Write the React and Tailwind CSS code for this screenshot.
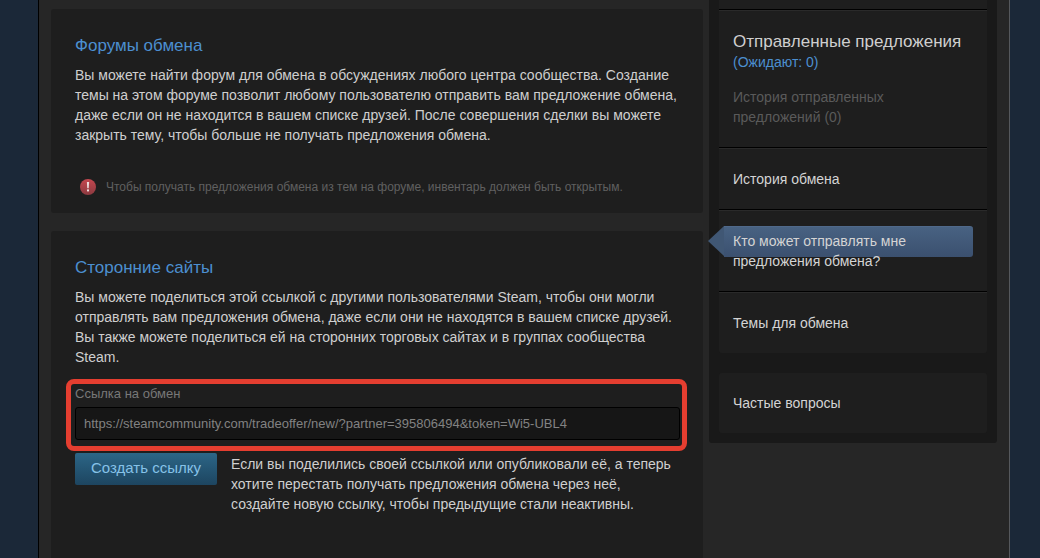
const bodyFont = "font-['Liberation_Sans',Arial,sans-serif]";

function AlertIcon() {
  return (
    <svg width="16" height="16" viewBox="0 0 16 16" className="shrink-0">
      <defs>
        <linearGradient id="alertFill" x1="0" y1="0" x2="0" y2="1">
          <stop offset="0" stopColor="#c4474f" />
          <stop offset="1" stopColor="#8c3a40" />
        </linearGradient>
      </defs>
      <circle cx="8" cy="8" r="8" fill="url(#alertFill)" />
      <path d="M6.9 3h2.2l-.4 6.2H7.3z" fill="#eedfdf" />
      <rect x="7" y="10.4" width="2" height="2" fill="#eedfdf" />
    </svg>
  );
}

function Divider() {
  return <div className="h-[2px] shrink-0 border-t border-black bg-[#2a2a2a]" />;
}

function ActiveTab() {
  return (
    <div className="absolute left-[-25px] top-[15px] flex h-[31px] w-[265px]">
      <div className="h-0 w-0 border-y-[15.5px] border-r-[16px] border-y-transparent border-r-[#405774]" />
      <div className="flex-1 rounded-r-[3px] border-t border-[#50698a] bg-gradient-to-b from-[#486282] to-[#3b506f]" />
    </div>
  );
}

export default function App() {
  return (
    <div className={`flex h-[558px] w-[1040px] overflow-hidden bg-[#1b2838] ${bodyFont}`}>
      <div className="w-[38px] shrink-0" />
      <div className="flex w-[972px] shrink-0 gap-[6px] border-x border-l-black border-r-[#55585c] bg-[#262626] pl-[12px] pt-[9px] pr-[12px]">
        <main className="flex w-[652px] shrink-0 flex-col gap-[18px]">
          <section className="h-[204px] rounded-[3px] bg-[#1e1e1e] px-[24px] pt-[26px]">
            <h2 className="text-[17px] leading-[20px] translate-y-[1px] font-normal text-[#4c8fd0]">Форумы обмена</h2>
            <p className="mt-[10px] w-[612px] text-[14px] leading-[20px] text-[#cfcfcf]">
              Вы можете найти форум для обмена в обсуждениях любого центра сообщества. Создание темы на этом форуме позволит любому пользователю отправить вам предложение обмена, даже если он не находится в вашем списке друзей. После совершения сделки вы можете закрыть тему, чтобы больше не получать предложения обмена.
            </p>
            <div className="mt-[34px] ml-[5px] flex items-center gap-[10px]">
              <AlertIcon />
              <span className="text-[12px] leading-[16px] text-[#606060]">
                Чтобы получать предложения обмена из тем на форуме, инвентарь должен быть открытым.
              </span>
            </div>
          </section>
          <section className="relative flex-1 rounded-t-[3px] bg-[#1e1e1e] px-[24px] pt-[26px]">
            <h2 className="text-[17px] leading-[20px] translate-y-[1px] font-normal text-[#4c8fd0]">Сторонние сайты</h2>
            <p className="mt-[10px] w-[612px] text-[14px] leading-[20px] text-[#cfcfcf]">
              Вы можете поделиться этой ссылкой с другими пользователями Steam, чтобы они могли отправлять вам предложения обмена, даже если они не находятся в вашем списке друзей. Вы также можете поделиться ей на сторонних торговых сайтах и в группах сообщества Steam.
            </p>
            <div className="mt-[19px] text-[13px] leading-[16px] text-[#787878]">Ссылка на обмен</div>
            <div className="mt-[5px] flex h-[33px] w-[605px] items-center rounded-[3px] border border-black bg-[#161616] px-[8px] text-[13px] text-[#828282]">
              https://steamcommunity.com/tradeoffer/new/?partner=395806494&amp;token=Wi5-UBL4
            </div>
            <div className="mt-[13px] flex gap-[14px]">
              <button className="h-[32px] w-[142px] shrink-0 rounded-[2px] bg-gradient-to-b from-[#2c6687] to-[#1d4560] pb-[1px] text-[15px] text-[#86c2e8]">
                Создать ссылку
              </button>
              <p className="mt-[1px] w-[450px] text-[14px] leading-[20px] text-[#cfcfcf]">
                Если вы поделились своей ссылкой или опубликовали её, а теперь хотите перестать получать предложения обмена через неё, создайте новую ссылку, чтобы предыдущие стали неактивны.
              </p>
            </div>
            <div className="absolute left-[15px] top-[148px] h-[72px] w-[621px] rounded-[8px] border-[5px] border-[#e53e30]" />
          </section>
        </main>
        <aside className="mt-[-9px] flex h-[443px] w-[288px] shrink-0 flex-col gap-[20px] rounded-b-[3px] bg-[#191919] px-[10px] pb-[10px]">
          <div className="flex h-[353px] flex-col rounded-b-[3px] bg-[#1e1e1e] pl-[14px] pr-0">
            <div className="-ml-[14px] flex flex-col">
              <div className="h-[9px] shrink-0" />
              <Divider />
            </div>
            <div className="h-[136px] pt-[21px]">
              <div className="text-[17px] leading-[20px] text-[#cfcfcf]">Отправленные предложения</div>
              <div className="text-[14px] leading-[20px] text-[#4c8fd0]">(Ожидают: 0)</div>
              <div className="mt-[15px] w-[220px] text-[14px] leading-[20px] text-[#5a5a5a]">История отправленных предложений (0)</div>
            </div>
            <div className="-ml-[14px]"><Divider /></div>
            <div className="flex h-[60px] items-center text-[14px] leading-[20px] text-[#d4d4d4]">История обмена</div>
            <div className="-ml-[14px]"><Divider /></div>
            <div className="relative h-[80px] pt-[20px] text-[14px] leading-[20px] text-[#d4d4d4]">
              <ActiveTab />
              <div className="relative w-[220px]">Кто может отправлять мне предложения обмена?</div>
            </div>
            <div className="-ml-[14px]"><Divider /></div>
            <div className="flex flex-1 items-center text-[14px] leading-[20px] text-[#d4d4d4]">Темы для обмена</div>
          </div>
          <div className="flex h-[60px] items-center rounded-[3px] bg-[#1e1e1e] pl-[14px] text-[14px] leading-[20px] text-[#d4d4d4]">
            Частые вопросы
          </div>
        </aside>
      </div>
      <div className="flex-1" />
    </div>
  );
}
